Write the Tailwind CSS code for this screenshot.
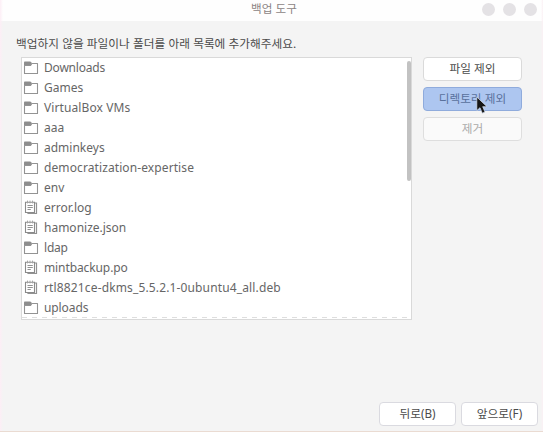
<!DOCTYPE html>
<html lang="ko">
<head>
<meta charset="utf-8">
<title>백업 도구</title>
<script src="https://cdn.jsdelivr.net/npm/@tailwindcss/browser@4"></script>
</head>
<body class="w-[543px] h-[432px] overflow-hidden bg-[#f4f4f4] font-['Noto_Sans','Noto_Sans_CJK_KR',sans-serif]">
<svg class="hidden">
  <symbol id="folder" viewBox="0 0 16 16">
    <path d="M1 2.2Q1 1.4 1.8 1.4H7Q7.8 1.4 8.2 2.2L9 3.9L8 5.6H1Z" fill="#8d8d8d"/>
    <path d="M1.5 5.5H7.6L8.9 3.5H14.5V13.5H1.5Z" fill="#fff" stroke="#939393" stroke-width="1.1" stroke-linejoin="round"/>
  </symbol>
  <symbol id="doc" viewBox="0 0 16 16">
    <path d="M12 3H13.5V13.5H5V13" fill="none" stroke="#929292" stroke-width="1.2"/>
    <path d="M2.5 2.2H11.5V12.5H2.5Z" fill="#fff" stroke="#8a8a8a" stroke-width="1.1"/>
    <path d="M4.5 .6V3.4M7 .6V3.4M9.5 .6V3.4" stroke="#a4a4a4" stroke-width="1"/>
    <path d="M4.5 5.5H9.8M4.5 7.5H9.8M4.5 9.5H7.8" stroke="#909090" stroke-width="1"/>
  </symbol>
</svg>
<main class="relative flex h-full flex-col border-b border-[#eadbd2]">
  <header class="relative h-[21px] shrink-0 bg-[#fefefe] text-center">
    <h1 class="pl-[5px] font-['Noto_Sans_CJK_KR',sans-serif] text-[11.6px] leading-[17px] text-[#8c8484]">백업 도구</h1>
    <div class="absolute right-[6px] top-[3px] flex gap-2">
      <i class="size-[13px] rounded-full bg-[#e4e2e5]"></i><i class="size-[13px] rounded-full bg-[#e4e2e5]"></i><i class="size-[13px] rounded-full bg-[#e4e2e5]"></i>
    </div>
  </header>
  <p class="ml-4 mt-[13px] h-[23px] whitespace-nowrap font-['Noto_Sans_CJK_KR',sans-serif] text-[11.67px] leading-[18px] text-[#4b4b4b]">백업하지 않을 파일이나 폴더를 아래 목록에 추가해주세요.</p>
  <section class="ml-[21px] flex gap-[11px]">
    <div class="relative h-[263px] w-[391px] overflow-hidden border border-[#d9d9d9] bg-white">
      <ul class="text-[12px] leading-[20px] text-[#666]">
        <li class="flex h-5 items-center gap-[5px] pl-px"><svg class="size-4"><use href="#folder"/></svg><span class="tracking-[-0.2px]">Downloads</span></li>
        <li class="flex h-5 items-center gap-[5px] pl-px"><svg class="size-4"><use href="#folder"/></svg><span>Games</span></li>
        <li class="flex h-5 items-center gap-[5px] pl-px"><svg class="size-4"><use href="#folder"/></svg><span class="tracking-[0.1px]">VirtualBox VMs</span></li>
        <li class="flex h-5 items-center gap-[5px] pl-px"><svg class="size-4"><use href="#folder"/></svg><span>aaa</span></li>
        <li class="flex h-5 items-center gap-[5px] pl-px"><svg class="size-4"><use href="#folder"/></svg><span>adminkeys</span></li>
        <li class="flex h-5 items-center gap-[5px] pl-px"><svg class="size-4"><use href="#folder"/></svg><span class="tracking-[0.1px]">democratization-expertise</span></li>
        <li class="flex h-5 items-center gap-[5px] pl-px"><svg class="size-4"><use href="#folder"/></svg><span>env</span></li>
        <li class="flex h-5 items-center gap-[5px] pl-px"><svg class="size-4"><use href="#doc"/></svg><span>error.log</span></li>
        <li class="flex h-5 items-center gap-[5px] pl-px"><svg class="size-4"><use href="#doc"/></svg><span>hamonize.json</span></li>
        <li class="flex h-5 items-center gap-[5px] pl-px"><svg class="size-4"><use href="#folder"/></svg><span class="tracking-[-0.2px]">ldap</span></li>
        <li class="flex h-5 items-center gap-[5px] pl-px"><svg class="size-4"><use href="#doc"/></svg><span class="tracking-[-0.1px]">mintbackup.po</span></li>
        <li class="flex h-5 items-center gap-[5px] pl-px"><svg class="size-4"><use href="#doc"/></svg><span class="tracking-[0.14px]">rtl8821ce-dkms_5.5.2.1-0ubuntu4_all.deb</span></li>
        <li class="flex h-5 items-center gap-[5px] pl-px"><svg class="size-4"><use href="#folder"/></svg><span class="tracking-[-0.1px]">uploads</span></li>
      </ul>
      <div class="absolute right-0 top-[3px] h-[120px] w-[4px] rounded-full bg-[#c2c2c2]"></div>
      <div class="absolute bottom-[1px] left-0 h-px w-full bg-[repeating-linear-gradient(90deg,#dedede_0_5px,#fff_5px_10px)]"></div>
    </div>
    <div class="flex w-[99px] flex-col gap-[6px] font-['Noto_Sans_CJK_KR',sans-serif] text-[11.65px] leading-[18px]">
      <button class="h-[24px] rounded-[4px] border border-[#dadada] bg-white pb-[2px] text-[#4b4b4b]">파일 제외</button>
      <button class="h-[24px] rounded-[4px] border border-[#8fabdc] bg-[#adc6f0] pb-[2px] text-[#59709c]">디렉토리 제외</button>
      <button class="h-[24px] rounded-[4px] border border-[#dedede] bg-[#fafafa] pb-[2px] text-[#aaa]">제거</button>
    </div>
  </section>
  <footer class="mb-[5px] mr-[5px] mt-auto flex justify-end gap-[5px] font-['Noto_Sans','Noto_Sans_CJK_KR',sans-serif] text-[11.7px] leading-[20px] text-[#4b4b4b]">
    <button class="h-[24px] w-[77px] rounded-[4px] border border-[#dadae0] bg-white pb-[2px]">뒤로(B)</button>
    <button class="h-[24px] w-[77px] rounded-[4px] border border-[#dadae0] bg-white pb-[2px]">앞으로(F)</button>
  </footer>
  <svg class="absolute left-[476px] top-[96px] h-[19px] w-[12px]" viewBox="0 0 12 19"><path d="M.8 1V14.6L4 11.7L6.3 17.2L9 16L6.7 10.7H11Z" fill="#151515" stroke="#d9e2f2" stroke-width=".7"/></svg>
  <div class="absolute inset-y-0 left-0 w-[3px] bg-linear-to-r from-[#fdeef6] to-[#f4f4f4]/0"></div>
  <div class="absolute inset-y-0 right-0 w-[2px] bg-linear-to-l from-[#fbf0f4] to-[#f4f4f4]/0"></div>
</main>
</body>
</html>
